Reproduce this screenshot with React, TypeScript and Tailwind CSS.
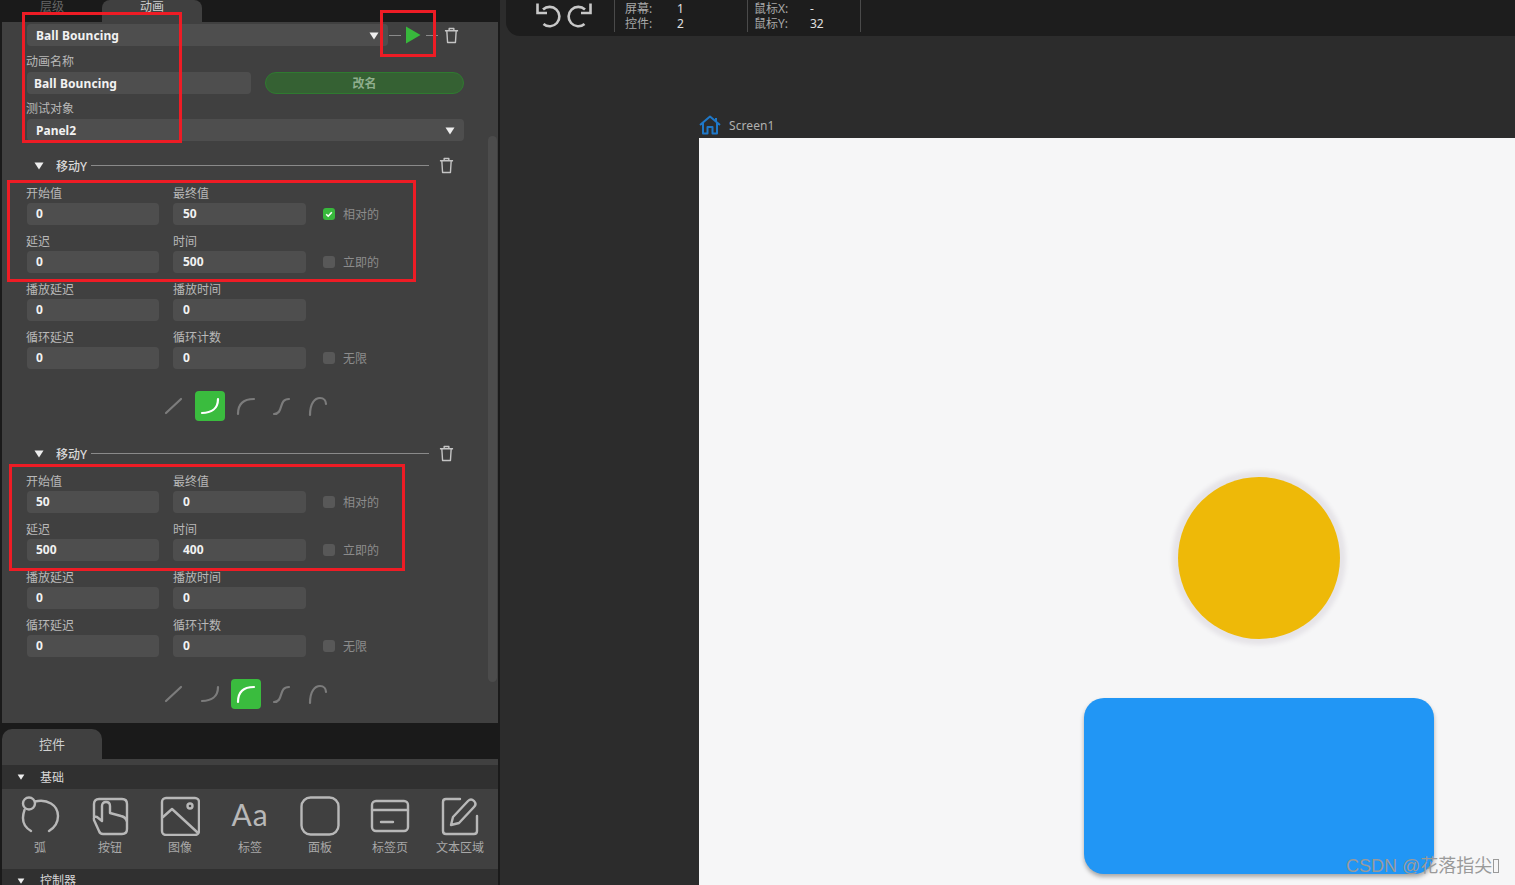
import type { ReactNode } from 'react';

const cjk = "font-['Noto_Sans','Noto_Sans_CJK_SC',sans-serif]";

function Caret({ className = '' }: { className?: string }) {
  return (
    <svg viewBox="0 0 10 8" className={`w-[10px] h-[8px] ${className}`}>
      <path d="M0.5 0.5h9L5 7.5z" fill="#eeeeee" />
    </svg>
  );
}

function Trash() {
  return (
    <svg viewBox="0 0 16 18" className="w-[15px] h-[17px]" fill="none" stroke="#c4c4c4" strokeWidth="1.5">
      <path d="M1 4h14M5.5 4V1.5h5V4M3 4l0.8 12.5h8.4L13 4" strokeLinejoin="round" />
    </svg>
  );
}

function Field({ label, value, wide }: { label: string; value: string; wide?: boolean }) {
  return (
    <div className={wide ? 'w-[133px]' : 'w-[132px]'}>
      <div className={`h-[18px] leading-[18px] pt-[2px] text-[12px] text-[#b8b8b8] ${wide ? '' : '-ml-[1px]'}`}>{label}</div>
      <div className={`h-[22px] leading-[22px] mt-[2px] rounded-[4px] bg-[#4e4e4e] text-[12px] font-bold text-[#f2f2f2] ${wide ? 'px-[10px]' : 'px-[9px]'}`}>
        {value}
      </div>
    </div>
  );
}

function Check({ label, checked }: { label: string; checked?: boolean }) {
  return (
    <div className="flex items-center gap-[8px] ml-[17px] mt-[20px] h-[22px] text-[12px] text-[#8c8c8c]">
      <div className={`w-[12px] h-[12px] rounded-[3px] flex items-center justify-center ${checked ? 'bg-[#38b83c]' : 'bg-[#585858]'}`}>
        {checked && (
          <svg viewBox="0 0 12 12" className="w-[12px] h-[12px]" fill="none" stroke="#ffffff" strokeWidth="1.6">
            <path d="M3.2 6.2l2 2 3.6-4" />
          </svg>
        )}
      </div>
      <span className="pt-[2px]">{label}</span>
    </div>
  );
}

const curves = [
  'M7 22 L22 8',
  'M7 22 C16 22 23 18 23 8',
  'M7 23 C7 13 12 8 23 8',
  'M7 23 C17 23 11 8 22 8',
  'M7 24 C7 12 12 7 17 7 C21 7 23 10 23 13',
];

function Curves({ active }: { active: number }) {
  return (
    <div className="flex justify-center items-center gap-[6px] h-[30px] pr-[7px] mt-[22px]">
      {curves.map((d, i) => (
        <div
          key={d}
          className={`w-[30px] h-[30px] rounded-[4px] flex items-center justify-center ${i === active ? 'bg-[#3abc3e]' : ''}`}
        >
          <svg viewBox="0 0 30 30" className="w-[30px] h-[30px]" fill="none" stroke={i === active ? '#ffffff' : '#7c7c7c'} strokeWidth="2.2" strokeLinecap="round">
            <path d={d} />
          </svg>
        </div>
      ))}
    </div>
  );
}

function Track({ start, end, delay, time, rel, active }: { start: string; end: string; delay: string; time: string; rel?: boolean; active: number }) {
  return (
    <div>
      <div className="flex items-center h-[24px] pl-[34px]">
        <Caret className="mt-[2px]" />
        <span className="ml-[12px] pt-[3px] font-medium text-[12px] text-[#d8d8d8]">移动Y</span>
        <div className="ml-[4px] w-[338px] h-px bg-[#8a8a8a]" />
        <div className="ml-[10px] pt-[1px]"><Trash /></div>
      </div>
      <div className="pl-[27px] mt-[6px] flex flex-col gap-[6px]">
        <div className="flex gap-[14px]">
          <Field label="开始值" value={start} />
          <div className="flex">
            <Field label="最终值" value={end} wide />
            <Check label="相对的" checked={rel} />
          </div>
        </div>
        <div className="flex gap-[14px]">
          <Field label="延迟" value={delay} />
          <div className="flex">
            <Field label="时间" value={time} wide />
            <Check label="立即的" />
          </div>
        </div>
        <div className="flex gap-[14px]">
          <Field label="播放延迟" value="0" />
          <Field label="播放时间" value="0" wide />
        </div>
        <div className="flex gap-[14px]">
          <Field label="循环延迟" value="0" />
          <div className="flex">
            <Field label="循环计数" value="0" wide />
            <Check label="无限" />
          </div>
        </div>
      </div>
      <Curves active={active} />
    </div>
  );
}

function WidgetIcon({ children }: { children: ReactNode }) {
  return (
    <svg viewBox="0 0 40 40" className="w-[40px] h-[40px]" fill="none" stroke="#b8b8b8" strokeWidth="2.4" strokeLinecap="round" strokeLinejoin="round">
      {children}
    </svg>
  );
}

const widgets: { label: string; icon: ReactNode }[] = [
  {
    label: '弧',
    icon: (
      <WidgetIcon>
        <circle cx="9" cy="7.500" r="6" />
        <path d="M15 5.500 C27 2.500 38 9 38 20 C38 27 34 32 29 35 M4.500 14 C1 24 4 31 11 35" />
      </WidgetIcon>
    ),
  },
  {
    label: '按钮',
    icon: (
      <WidgetIcon>
        <path d="M4 21 V8 Q4 3 9 3 H32 Q37 3 37 8 V33 Q37 38 32 38 H13 Q10 38 9 35 L4 24 Q3 20 7 21 L12 25 V10 Q12 6 16 6 Q20 6 20 10 V17 L31 20 Q36 21 37 26" />
      </WidgetIcon>
    ),
  },
  {
    label: '图像',
    icon: (
      <WidgetIcon>
        <rect x="2" y="2" width="37" height="37" rx="4" />
        <path d="M3 21 L12 13 L37 36" />
        <circle cx="30" cy="10" r="2.500" />
      </WidgetIcon>
    ),
  },
  { label: '标签', icon: <span className="block h-[40px] leading-[36px] tracking-[1px] text-[30px] text-[#b8b8b8] font-['Lato',sans-serif]">Aa</span> },
  {
    label: '面板',
    icon: (
      <WidgetIcon>
        <rect x="1.5" y="1.5" width="37" height="37" rx="9" />
      </WidgetIcon>
    ),
  },
  {
    label: '标签页',
    icon: (
      <WidgetIcon>
        <rect x="2" y="5" width="36" height="30" rx="4" />
        <path d="M2 14 H38 M11 26 H23" />
      </WidgetIcon>
    ),
  },
  {
    label: '文本区域',
    icon: (
      <WidgetIcon>
        <path d="M20 3 H6 Q3 3 3 6 V35 Q3 38 6 38 H34 Q37 38 37 35 V20" />
        <path d="M11 29 L13 21 L28 5 Q31 2 34 5 Q37 8 34 11 L19 27 Z" />
      </WidgetIcon>
    ),
  },
];

function Stat({ label, value, wide }: { label: string; value: string; wide?: boolean }) {
  return (
    <div className="flex h-[15px] leading-[15px]">
      <span className={`${wide ? 'w-[56px]' : 'w-[52px]'} text-[#a8a8a8]`}>{label}</span>
      <span className="text-[#e0e0e0]">{value}</span>
    </div>
  );
}

export default function App() {
  return (
    <div className={`relative w-[1515px] h-[885px] overflow-hidden flex bg-[#2c2c2c] ${cjk}`}>
      <div className="relative w-[500px] shrink-0 h-full flex flex-col bg-[#1a1a1a] pl-[2px] pr-[2px]">
        {/* tabs */}
        <div className="h-[22px] flex shrink-0 text-[12px]">
          <div className="w-[100px] text-center leading-[14px] text-[#666666]">层级</div>
          <div className="w-[100px] text-center leading-[14px] text-[#cfcfcf] bg-[#404040] rounded-t-[8px]">动画</div>
        </div>

        {/* animation panel */}
        <div className="relative h-[701px] shrink-0 bg-[#404040] pl-[25px] pt-[2px] text-[12px] overflow-hidden">
          <div className="flex items-center h-[22px]">
            <div className="w-[361px] h-[22px] pt-[1px] rounded-[4px] bg-[#4e4e4e] flex items-center justify-between pl-[9px] pr-[9px] font-bold tracking-[0.1px] text-[#f2f2f2]">
              Ball Bouncing
              <Caret />
            </div>
            <div className="ml-[1px] w-[12px] h-px bg-[#8a8a8a]" />
            <svg viewBox="0 0 16 18" className="w-[16px] h-[18px] ml-[4px]">
              <path d="M1 0.5 L15.5 9 L1 17.5z" fill="#38b83c" />
            </svg>
            <div className="ml-[5px] w-[12px] h-px bg-[#8a8a8a]" />
            <div className="ml-[6px]"><Trash /></div>
          </div>

          <div className="h-[18px] mt-[6px] pt-[1px] leading-[18px] -ml-[1px] text-[#b8b8b8]">动画名称</div>
          <div className="flex items-center mt-[2px] h-[22px]">
            <div className="w-[224px] h-[22px] pt-[1px] leading-[22px] rounded-[4px] bg-[#4e4e4e] px-[7px] font-bold tracking-[0.1px] text-[#f2f2f2]">Ball Bouncing</div>
            <div className="ml-[14px] w-[199px] h-[22px] pt-[1px] leading-[20px] rounded-full bg-[#356133] border border-[#2f7a30] text-center font-bold text-[#8fae8d]">改名</div>
          </div>

          <div className="h-[18px] mt-[5px] pt-[1px] leading-[18px] -ml-[1px] text-[#b8b8b8]">测试对象</div>
          <div className="w-[437px] h-[22px] pt-[1px] mt-[2px] rounded-[4px] bg-[#4e4e4e] flex items-center justify-between px-[9px] font-bold text-[#f2f2f2]">
            Panel2
            <Caret />
          </div>

          <div className="-ml-[27px] mt-[12px] flex flex-col gap-[20px]">
            <Track start="0" end="50" delay="0" time="500" rel active={1} />
            <Track start="50" end="0" delay="500" time="400" active={2} />
          </div>

          {/* scrollbar */}
          <div className="absolute right-[1px] top-[114px] w-[9px] h-[546px] rounded-full bg-[#4c4c4c]" />
        </div>

        {/* widgets */}
        <div className="h-[36px] shrink-0 flex items-end pt-[6px]">
          <div className="w-[100px] h-[30px] leading-[30px] rounded-t-[10px] bg-[#404040] text-center text-[13px] text-[#d0d0d0]">控件</div>
        </div>
        <div className="flex-1 bg-[#404040] pt-[6px]">
          <div className="h-[24px] flex items-center bg-[#303030] pl-[14px] text-[12px] text-[#d8d8d8]">
            <Caret className="scale-75" />
            <span className="ml-[14px] pt-[2px]">基础</span>
          </div>
          <div className="grid grid-cols-7 w-[490px] ml-[3px] h-[80px] pt-[7px]">
            {widgets.map((w) => (
              <div key={w.label} className="flex flex-col items-center">
                {w.icon}
                <div className="mt-[4px] text-[12px] leading-[16px] text-[#a8a8a8]">{w.label}</div>
              </div>
            ))}
          </div>
          <div className="h-[24px] flex items-center bg-[#303030] pl-[14px] text-[12px] text-[#d8d8d8]">
            <Caret className="scale-75" />
            <span className="ml-[14px]">控制器</span>
          </div>
        </div>
      </div>

      {/* editor */}
      <div className="flex-1 flex flex-col min-w-0">
        <div className="h-[36px] shrink-0 ml-[6px] rounded-bl-[14px] bg-[#1d1d1d] flex text-[12px]">
          <div className="w-[108px] flex items-start pl-[30px] gap-[4px] pt-[2px]">
            <svg viewBox="0 0 26 26" className="w-[26px] h-[26px]" fill="none" stroke="#c8c8c8" strokeWidth="2.6">
              <path d="M1.500 1.500 V11 H11" />
              <path d="M7 7.500 A9.700 9.700 0 1 1 7.500 22" />
            </svg>
            <svg viewBox="0 0 26 26" className="w-[26px] h-[26px]" fill="none" stroke="#c8c8c8" strokeWidth="2.6">
              <path d="M24.500 1.500 V11 H15" />
              <path d="M19 7.500 A9.700 9.700 0 1 0 18.500 22" />
            </svg>
          </div>
          <div className="w-[133px] h-[32px] border-l border-[#4a4a4a] pl-[10px] pt-[1px]">
            <Stat label="屏幕:" value="1" />
            <Stat label="控件:" value="2" />
          </div>
          <div className="w-[114px] h-[32px] border-l border-r border-[#4a4a4a] pl-[6px] pt-[1px]">
            <Stat label="鼠标X:" value="-" wide />
            <Stat label="鼠标Y:" value="32" wide />
          </div>
        </div>

        <div className="h-[66px] shrink-0" />
        <div className="h-[36px] shrink-0 pl-[199px] flex items-end pb-[3px] gap-[8px] text-[12px] text-[#b0b0b0]">
          <svg viewBox="0 0 22 20" className="w-[22px] h-[20px]" fill="none" stroke="#1f78c8" strokeWidth="2" strokeLinejoin="round">
            <path d="M1 10 L11 1.500 L21 10 M17 6.500 V3 M4 8 V18.500 H8.500 V12 H13.500 V18.500 H18 V8" />
          </svg>
          <span className="tracking-[0.1px]">Screen1</span>
        </div>

        {/* canvas */}
        <div className="relative flex-1 ml-[199px] bg-[#f6f6f7]">
          <div className="absolute left-[479px] top-[339px] w-[162px] h-[162px] rounded-full bg-[#eeb908] shadow-[0_0_4px_6px_#e6e4e8] blur-[0.6px]" />
          <div className="absolute left-[385px] top-[560px] w-[350px] h-[176px] rounded-[20px] bg-[#2196f5] shadow-[0_3px_4px_#a8a8a8] blur-[0.6px]" />
        </div>
      </div>

      {/* watermark */}
      <div className="absolute left-[1346px] top-[855px] flex items-center text-[18px] leading-[22px] text-[#9a9a9a] font-['Liberation_Sans','Noto_Sans_CJK_SC',sans-serif]">
        CSDN @花落指尖
        <span className="ml-[1px] w-[6px] h-[14px] border border-[#9a9a9a]" />
      </div>

      {/* red annotation boxes */}
      <div className="absolute left-[22px] top-[12px] w-[160px] h-[131px] border-[3px] border-[#ee1c25]" />
      <div className="absolute left-[380px] top-[10px] w-[56px] h-[47px] border-[3px] border-[#ee1c25]" />
      <div className="absolute left-[7px] top-[180px] w-[409px] h-[102px] border-[3px] border-[#ee1c25]" />
      <div className="absolute left-[9px] top-[464px] w-[396px] h-[107px] border-[3px] border-[#ee1c25]" />
    </div>
  );
}
